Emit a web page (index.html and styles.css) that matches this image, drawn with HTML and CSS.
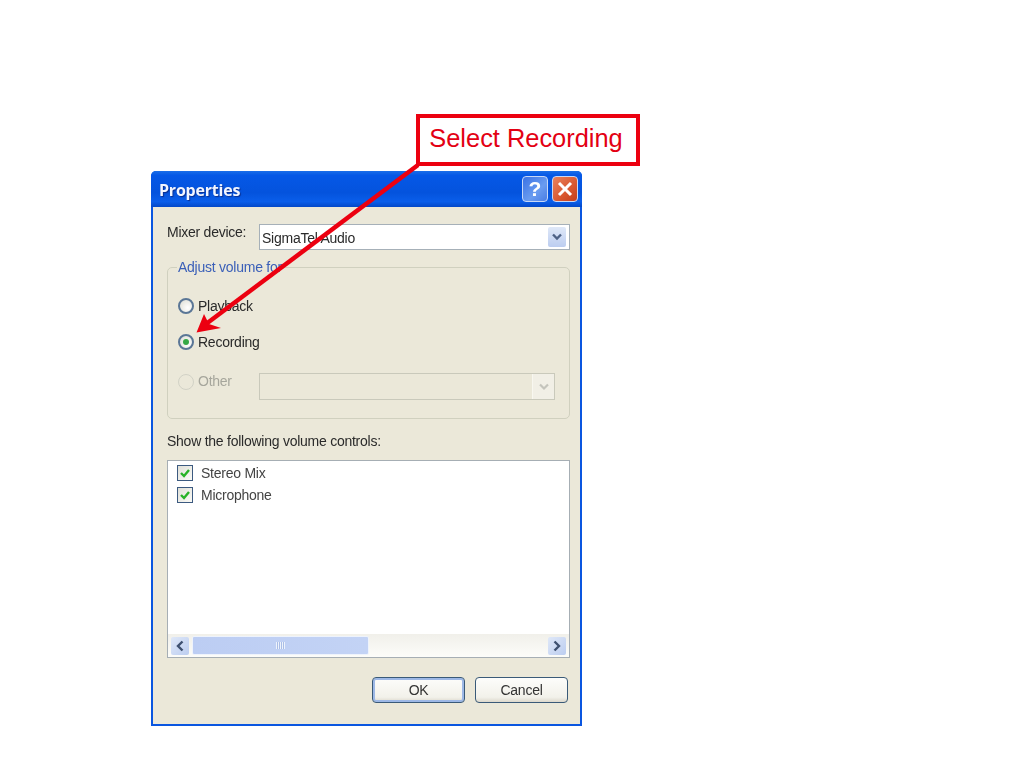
FILE: index.html
```html
<!DOCTYPE html>
<html lang="en">
<head>
<meta charset="utf-8">
<title>Select Recording</title>
<link rel="stylesheet" href="styles.css">
</head>
<body>
<div class="dialog">
  <div class="titlebar">
    <span class="title">Properties</span>
    <span class="tb-btn help">?</span>
    <span class="tb-btn close"><svg width="18" height="18" viewBox="0 0 18 18"><path d="M3 3L15 15M15 3L3 15" stroke="#fff" stroke-width="3" fill="none"/></svg></span>
  </div>
  <div class="body">
    <div class="mixer-row">
      <span class="mixer-label">Mixer device:</span>
      <div class="combo">
        <span class="combo-text">SigmaTel Audio</span>
        <span class="drop"><svg width="12" height="8" viewBox="0 0 12 8"><path d="M2 1.5L6 5.5L10 1.5" stroke="#4d6185" stroke-width="2.4" fill="none"/></svg></span>
      </div>
    </div>
    <fieldset class="group">
      <legend class="legend">Adjust volume for</legend>
      <div class="option opt-play"><span class="radio"></span><span>Playback</span></div>
      <div class="option opt-rec"><span class="radio checked"></span><span>Recording</span></div>
      <div class="option opt-other disabled">
        <span class="radio off"></span><span class="other-label">Other</span>
        <div class="combo-off"><span class="drop-off"><svg width="12" height="8" viewBox="0 0 12 8"><path d="M2 1.5L6 5.5L10 1.5" stroke="#c4c4bc" stroke-width="2.2" fill="none"/></svg></span></div>
      </div>
    </fieldset>
    <div class="show-label">Show the following volume controls:</div>
    <div class="listbox">
      <div class="items">
        <div class="item"><span class="check"><svg width="12" height="12" viewBox="0 0 12 12"><path d="M2 6L5 9L10 3" stroke="#27b327" stroke-width="2.4" fill="none"/></svg></span><span>Stereo Mix</span></div>
        <div class="item"><span class="check"><svg width="12" height="12" viewBox="0 0 12 12"><path d="M2 6L5 9L10 3" stroke="#27b327" stroke-width="2.4" fill="none"/></svg></span><span>Microphone</span></div>
      </div>
      <div class="scrollbar">
        <span class="sb-btn"><svg width="10" height="12" viewBox="0 0 10 12"><path d="M7.5 1.5L3 6L7.5 10.5" stroke="#3f5170" stroke-width="2.4" fill="none"/></svg></span>
        <span class="thumb"><span class="grip"></span></span>
        <span class="track"></span>
        <span class="sb-btn"><svg width="10" height="12" viewBox="0 0 10 12"><path d="M2.5 1.5L7 6L2.5 10.5" stroke="#3f5170" stroke-width="2.4" fill="none"/></svg></span>
      </div>
    </div>
    <div class="buttons">
      <span class="btn default">OK</span>
      <span class="btn">Cancel</span>
    </div>
  </div>
</div>
<svg class="arrow" width="1024" height="768" viewBox="0 0 1024 768">
  <path d="M418 165L206 324" stroke="#ec0010" stroke-width="4.5" fill="none"/>
  <path d="M196.500 332.500L204 314L209 324L221 328Z" fill="#ec0010"/>
</svg>
<div class="callout">Select Recording</div>
</body>
</html>
```
FILE: styles.css
```css
html, body {
  margin: 0;
  padding: 0;
  background: #fff;
  height: 768px;
  overflow: hidden;
}
.dialog {
  position: absolute;
  left: 151px;
  top: 171px;
  width: 431px;
  height: 555px;
  display: flex;
  flex-direction: column;
  box-sizing: border-box;
  border-radius: 5px 5px 0 0;
  background: #0a56e0;
  font-family: "Liberation Sans", Arial, sans-serif;
  font-size: 14px;
  letter-spacing: -0.25px;
  color: #2a2a2a;
  filter: blur(0.45px);
}
.titlebar {
  height: 36px;
  flex: none;
  display: flex;
  align-items: center;
  gap: 4px;
  padding: 0 4px 0 8px;
  border-radius: 5px 5px 0 0;
  background: linear-gradient(#1a6ee8 0, #0558e6 12%, #0453dd 60%, #0a5eea 85%, #0348c8 100%);
}
.title {
  flex: 1;
  padding-top: 2px;
  font-family: "Open Sans", sans-serif;
  font-weight: 700;
  font-size: 16px;
  letter-spacing: -0.2px;
  color: #f2f6ff;
  text-shadow: 1px 1px 1px #0a2f90;
}
.tb-btn {
  width: 26px;
  height: 26px;
  box-sizing: border-box;
  border: 1px solid #c8d8f6;
  border-radius: 4px;
  display: flex;
  align-items: center;
  justify-content: center;
}
.help {
  background: linear-gradient(135deg, #3a72e4, #6a9cf0 60%, #4a7de4);
  color: #fff;
  font-weight: 700;
  font-size: 21px;
  letter-spacing: 0;
}
.close {
  background: linear-gradient(135deg, #e8825e, #d9572f 60%, #c23e1e);
}
.body {
  flex: 1;
  margin: 0 2px 2px 2px;
  padding: 17px 10px 0 14px;
  background: #ebe8d9;
  display: flex;
  flex-direction: column;
}
.mixer-row {
  display: flex;
  align-items: flex-start;
  height: 26px;
}
.mixer-label {
  width: 92px;
  flex: none;
  line-height: 17px;
}
.combo {
  flex: 1;
  height: 26px;
  box-sizing: border-box;
  background: #fff;
  border: 1px solid #a6b0b8;
  display: flex;
  align-items: center;
  justify-content: space-between;
  padding: 2px 3px 2px 2px;
}
.combo-text {
  padding-top: 2px;
}
.drop {
  width: 18px;
  height: 20px;
  border-radius: 2px;
  background: linear-gradient(#dfe8f8, #bccdf0);
  display: flex;
  align-items: center;
  justify-content: center;
}
.group {
  margin: 9px 0 0 0;
  padding: 0 14px 0 10px;
  height: 160px;
  box-sizing: border-box;
  border: 1px solid #d0d0bf;
  border-radius: 5px;
  min-width: 0;
}
.legend {
  padding: 0 1px;
  margin-left: -1px;
  color: #3a5fb8;
  line-height: 17px;
}
.option {
  display: flex;
  align-items: center;
  gap: 4px;
  height: 18px;
}
.opt-play { margin-top: 21px; }
.opt-rec { margin-top: 18px; }
.opt-other {
  margin-top: 22px;
  height: 27px;
  align-items: flex-start;
}
.radio {
  width: 16px;
  height: 16px;
  box-sizing: border-box;
  border: 2px solid #5a7696;
  border-radius: 50%;
  background: radial-gradient(circle at 65% 65%, #fff, #dcdcd2);
  display: flex;
  align-items: center;
  justify-content: center;
  flex: none;
}
.radio.checked::after {
  content: "";
  width: 6px;
  height: 6px;
  border-radius: 50%;
  background: #35a845;
}
.radio.off {
  margin-top: 1px;
  border: 1px solid #d2d2c6;
  background: #ebe8d9;
}
.disabled {
  color: #a6a69c;
}
.other-label {
  width: 57px;
  flex: none;
  line-height: 16px;
}
.combo-off {
  flex: 1;
  height: 27px;
  box-sizing: border-box;
  border: 1px solid #c9c9bb;
  background: #ebe8d9;
  display: flex;
  justify-content: flex-end;
  align-items: center;
}
.drop-off {
  width: 21px;
  height: 25px;
  background: #f1efe6;
  display: flex;
  align-items: center;
  justify-content: center;
  border-left: 1px solid #f8f7f0;
}
.show-label {
  margin-top: 14px;
  height: 26px;
  line-height: 17px;
}
.listbox {
  height: 198px;
  margin-top: 1px;
  box-sizing: border-box;
  background: #fff;
  border: 1px solid #a6aeb4;
  display: flex;
  flex-direction: column;
  justify-content: space-between;
}
.items {
  padding: 4px 0 0 9px;
  display: flex;
  flex-direction: column;
  gap: 6px;
}
.item {
  display: flex;
  align-items: center;
  gap: 8px;
  height: 16px;
  color: #444;
}
.check {
  width: 16px;
  height: 16px;
  box-sizing: border-box;
  border: 1px solid #3c5a80;
  background: linear-gradient(135deg, #e0e0d8, #fafaf6);
  display: flex;
  align-items: center;
  justify-content: center;
}
.scrollbar {
  height: 23px;
  display: flex;
  align-items: center;
  padding: 0 3px;
  background: linear-gradient(#f1f0ea, #fcfcf9);
}
.sb-btn {
  width: 18px;
  height: 18px;
  border-radius: 2px;
  background: linear-gradient(135deg, #dfe8f8, #bccdf0);
  display: flex;
  align-items: center;
  justify-content: center;
  flex: none;
}
.thumb {
  width: 177px;
  height: 19px;
  margin-left: 3px;
  flex: none;
  box-sizing: border-box;
  border: 1px solid #eef3fc;
  border-radius: 2px;
  background: linear-gradient(90deg, #bccdf3, #c3d3f5);
  display: flex;
  align-items: center;
  justify-content: center;
}
.grip {
  width: 9px;
  height: 7px;
  background: repeating-linear-gradient(90deg, #eef3fc 0 1px, #a9bde6 1px 2px);
}
.track {
  flex: 1;
}
.buttons {
  display: flex;
  justify-content: flex-end;
  gap: 10px;
  margin-top: 19px;
  padding-right: 2px;
}
.btn {
  width: 93px;
  height: 26px;
  box-sizing: border-box;
  border: 1px solid #3a5a78;
  border-radius: 4px;
  background: linear-gradient(#fdfdfb, #f2f1ea 80%, #dcd8cc);
  display: flex;
  align-items: center;
  justify-content: center;
  color: #333;
}
.btn.default {
  box-shadow: inset 0 0 0 2px #9db8e6;
}
.arrow {
  position: absolute;
  left: 0;
  top: 0;
  pointer-events: none;
}
.callout {
  position: absolute;
  left: 416px;
  top: 114px;
  width: 224px;
  height: 52px;
  box-sizing: border-box;
  padding: 0 4px 4px 0;
  border: 4px solid #ec0010;
  background: #fff;
  color: #e30013;
  font-family: "Liberation Sans", Arial, sans-serif;
  font-size: 25.4px;
  display: flex;
  align-items: center;
  justify-content: center;
}
```
